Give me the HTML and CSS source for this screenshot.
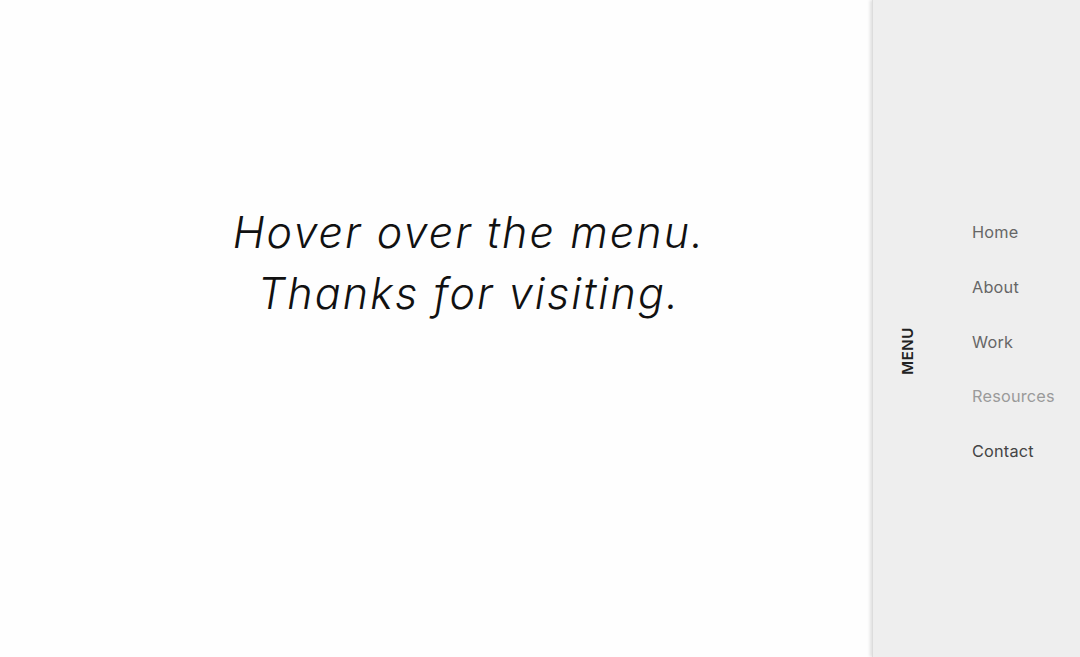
FILE: index.html
```html
<!DOCTYPE html>
<html lang="en">
<head>
<meta charset="utf-8">
<title>Menu</title>
<link rel="stylesheet" href="styles.css">
</head>
<body>
<div class="page">
  <main class="main">
    <h1 class="headline">Hover over the menu.<br>Thanks for visiting.</h1>
  </main>
  <aside class="sidebar">
    <div class="menu-col">
      <span class="menu-label">MENU</span>
    </div>
    <nav class="nav">
      <a class="nav-link" href="#">Home</a>
      <a class="nav-link" href="#">About</a>
      <a class="nav-link" href="#">Work</a>
      <a class="nav-link nav-link--hover" href="#">Resources</a>
      <a class="nav-link nav-link--dark" href="#">Contact</a>
    </nav>
  </aside>
</div>
</body>
</html>
```
FILE: styles.css
```css
html, body {
  margin: 0;
  padding: 0;
  height: 100%;
}
body {
  background: #fefefe;
  font-family: Inter, "Open Sans", "Liberation Sans", sans-serif;
  overflow: hidden;
}
.page {
  display: flex;
  height: 657px;
}
.main {
  flex: 1;
  display: flex;
  align-items: center;
  justify-content: center;
  padding-left: 66px;
  padding-bottom: 132px;
}
.headline {
  margin: 0;
  font-weight: 300;
  font-style: italic;
  font-size: 43px;
  line-height: 61px;
  color: #111;
  text-align: center;
  letter-spacing: 2.1px;
}
.sidebar {
  width: 208px;
  flex: 0 0 208px;
  background: #eeeeee;
  box-shadow: -2px 0 3px rgba(0,0,0,0.12);
  border-left: 1px solid #dcdcdc;
  box-sizing: border-box;
  display: flex;
  align-items: center;
}
.menu-col {
  width: 69px;
  flex: 0 0 69px;
  display: flex;
  justify-content: center;
  margin-top: 45px;
}
.menu-label {
  writing-mode: vertical-rl;
  transform: rotate(180deg);
  font-weight: 600;
  font-size: 15px;
  letter-spacing: 0.6px;
  color: #222;
}
.nav {
  margin-left: 30px;
  display: flex;
  flex-direction: column;
  margin-top: 27px;
}
.nav-link {
  display: block;
  height: 54.75px;
  line-height: 54.75px;
  font-size: 16.3px;
  letter-spacing: 0.2px;
  color: #666;
  text-decoration: none;
}
.nav-link--hover {
  color: #9a9a9a;
}
.nav-link--dark {
  color: #444;
}
```
